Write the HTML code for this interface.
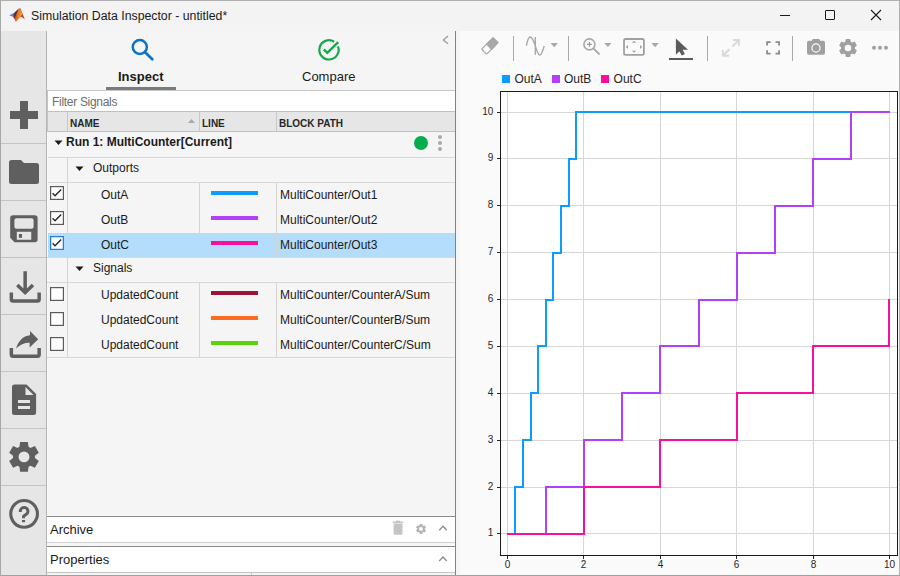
<!DOCTYPE html>
<html><head><meta charset="utf-8">
<style>
*{margin:0;padding:0;box-sizing:border-box}
html,body{width:900px;height:576px;overflow:hidden;background:#f3f3f3;font-family:"Liberation Sans",sans-serif;color:#1a1a1a}
.a{position:absolute}
.t{position:absolute;white-space:nowrap;line-height:1}
</style></head><body>
<div class="a" style="left:0;top:0;width:900px;height:576px;border:1px solid #b0b0b0;border-bottom:none"></div>
<!-- title bar -->
<svg class="a" style="left:6px;top:4px" width="24" height="22" viewBox="6 4 24 22">
  <defs><linearGradient id="lg1" x1="0" y1="0" x2="1" y2="0.3"><stop offset="0" stop-color="#8a1c16"/><stop offset="0.5" stop-color="#e0701f"/><stop offset="1" stop-color="#f3b030"/></linearGradient></defs>
  <path d="M9.2 15.3L13.5 13.2L17.8 9.6L16.5 13.5L14.2 17.2Z" fill="#3b8fd8"/>
  <path d="M13.8 14L18.8 8.2L17 14.5L14.6 18.8L13.6 17.3Z" fill="#7e1a22"/>
  <path d="M19.4 7.8L22.2 14.2L19.6 17.6L15.9 22L14.3 18.6L16.8 13Z" fill="url(#lg1)"/>
  <path d="M19.4 7.8L20.5 8.6L24.8 19.4L21.6 16.8L19.6 17.6L22.2 14.2Z" fill="#c4391d"/>
</svg>
<div class="t" style="left:31px;top:10px;font-size:12.3px;color:#1a1a1a">Simulation Data Inspector - untitled*</div>
<div class="a" style="left:780px;top:15px;width:10px;height:1px;background:#1a1a1a"></div>
<div class="a" style="left:825px;top:10px;width:10px;height:10px;border:1px solid #1a1a1a;border-radius:1px"></div>
<svg class="a" style="left:870px;top:9px" width="12" height="12" viewBox="0 0 12 12"><path d="M1 1 L11 11 M11 1 L1 11" stroke="#1a1a1a" stroke-width="1.1"/></svg>

<!-- left toolbar -->
<div class="a" style="left:1px;top:31px;width:46px;height:544px;background:#e6e6e6;border-right:1px solid #b4b4b4"></div>

<!-- left toolbar icons -->
<div class="a" style="left:1px;top:143px;width:45px;height:1px;background:#c4c4c4"></div>
<div class="a" style="left:1px;top:200px;width:45px;height:1px;background:#c4c4c4"></div>
<div class="a" style="left:1px;top:257px;width:45px;height:1px;background:#c4c4c4"></div>
<div class="a" style="left:1px;top:314px;width:45px;height:1px;background:#c4c4c4"></div>
<div class="a" style="left:1px;top:371px;width:45px;height:1px;background:#c4c4c4"></div>
<div class="a" style="left:1px;top:428px;width:45px;height:1px;background:#c4c4c4"></div>
<div class="a" style="left:1px;top:485px;width:45px;height:1px;background:#c4c4c4"></div>
<svg class="a" style="left:0;top:31px" width="46" height="544" viewBox="0 31 46 544">
 <g fill="#5f5f5f">
  <path d="M20 101h8v10h10v8h-10v10h-8v-10h-10v-8h10z"/>
  <path d="M9 162.5a2.5 2.5 0 0 1 2.5-2.5h9.5l3 3h12.5a2.5 2.5 0 0 1 2.5 2.5v16a2.5 2.5 0 0 1-2.5 2.5h-25a2.5 2.5 0 0 1-2.5-2.5z"/>
  <path fill-rule="evenodd" d="M13 215.2h21.8a2.8 2.8 0 0 1 2.8 2.8v21.5a2.8 2.8 0 0 1-2.8 2.8h-20.3l-4.3-4.6v-19.7a2.8 2.8 0 0 1 2.8-2.8zM16.4 218.3a2 2 0 0 0-2 2v6.45a2 2 0 0 0 2 2h15.2a2 2 0 0 0 2-2v-6.45a2 2 0 0 0-2-2zM16.8 231.7v8h14.45v-8z"/>
 </g>
 <rect x="18.9" y="234" width="3.1" height="3.8" fill="#5f5f5f"/>
 <g fill="none" stroke="#5f5f5f" stroke-width="3.2" stroke-linecap="round" stroke-linejoin="round">
  <path d="M25.15 271.3v21M17.3 285l7.85 7.6 7.85-7.6" stroke-linecap="butt" stroke-linejoin="miter" stroke-width="3.5"/>
  <path d="M11.35 292.4v6.9a1.8 1.8 0 0 0 1.8 1.8h24.2a1.8 1.8 0 0 0 1.8-1.8v-6.9" stroke-linecap="butt" stroke-width="3.5"/>
  <path d="M11.35 347.9v6.55a1.8 1.8 0 0 0 1.8 1.8h24.2a1.8 1.8 0 0 0 1.8-1.8v-6.55" stroke-linecap="butt" stroke-width="3.5"/>
 </g>
 <path d="M16.1 348.6C18 341.5 23 335.6 30 335.2V330.9L38.2 339.2L29.65 347.6V342.7C24.5 342.6 20 344.6 16.1 348.6z" fill="#5f5f5f"/>
 <path d="M14.5 384.5h12l9.6 9.6v18.5a2.5 2.5 0 0 1-2.5 2.5h-19.1a2.5 2.5 0 0 1-2.5-2.5v-25.6a2.5 2.5 0 0 1 2.5-2.5z" fill="#5f5f5f"/>
 <path d="M25.5 387v8h8z" fill="#e6e6e6"/>
 <rect x="18" y="400" width="12" height="3" fill="#e6e6e6"/>
 <rect x="18" y="406" width="12" height="3" fill="#e6e6e6"/>
 <path id="gear" fill="#5f5f5f" fill-rule="evenodd" d="M19.50 446.86L20.10 442.05L27.90 442.05L28.50 446.86A11.0 11.0 0 0 1 30.44 447.98L34.91 446.10L38.81 452.85L34.94 455.78A11.0 11.0 0 0 1 34.94 458.02L38.81 460.95L34.91 467.70L30.44 465.82A11.0 11.0 0 0 1 28.50 466.94L27.90 471.75L20.10 471.75L19.50 466.94A11.0 11.0 0 0 1 17.56 465.82L13.09 467.70L9.19 460.95L13.06 458.02A11.0 11.0 0 0 1 13.06 455.78L9.19 452.85L13.09 446.10L17.56 447.98A11.0 11.0 0 0 1 19.50 446.86ZM29.45 456.9A5.45 5.45 0 1 0 18.55 456.9A5.45 5.45 0 1 0 29.45 456.9Z"/>
 <circle cx="24.1" cy="513.85" r="13.35" fill="none" stroke="#5f5f5f" stroke-width="3.1"/>
 <path d="M20.3 512V511.3A3.8 3.8 0 1 1 27 513.7L23.6 516.2V518.2" fill="none" stroke="#5f5f5f" stroke-width="3"/>
 <rect x="22" y="520" width="3.1" height="2.2" fill="#5f5f5f"/>
</svg>

<!-- center panel -->
<div class="a" style="left:47px;top:31px;width:408px;height:544px;background:#f5f5f5"></div>
<div class="a" style="left:455px;top:31px;width:1px;height:544px;background:#828282"></div>
<svg class="a" style="left:128px;top:36px" width="30" height="28" viewBox="0 0 30 28">
 <circle cx="11.8" cy="11" r="7.05" fill="none" stroke="#0b72c4" stroke-width="2.5"/>
 <path d="M16.8 16L25.1 23.9" stroke="#0b72c4" stroke-width="2.7" stroke-linecap="butt"/>
</svg>
<div class="t" style="left:118px;top:69.5px;font-size:13px;font-weight:bold">Inspect</div>
<div class="a" style="left:106px;top:87px;width:70px;height:3px;background:#7a7a7a"></div>
<svg class="a" style="left:316px;top:37px" width="26" height="26" viewBox="0 0 26 26">
 <path d="M21.97 9.3A9.65 9.65 0 1 1 18.17 4.7" fill="none" stroke="#17a84a" stroke-width="2.2"/>
 <path d="M7.8 12.4L11.3 15.9L22.2 5.1" fill="none" stroke="#17a84a" stroke-width="2.4"/>
</svg>
<div class="t" style="left:302px;top:69.5px;font-size:13px">Compare</div>
<svg class="a" style="left:441px;top:34px" width="10" height="12" viewBox="0 0 10 12"><path d="M7 2L2.4 6L7 9.8" fill="none" stroke="#9a9a9a" stroke-width="1.3"/></svg>

<!-- filter + table -->
<div class="a" style="left:47px;top:90px;width:408px;height:1px;background:#c8c8c8"></div>
<div class="a" style="left:47px;top:91px;width:408px;height:20px;background:#fff"></div>
<div class="t" style="left:52px;top:96px;font-size:12px;letter-spacing:-0.3px;color:#6e6e6e">Filter Signals</div>
<div class="a" style="left:47px;top:111px;width:408px;height:21px;background:#e6e6e6;border-top:1px solid #c0c0c0;border-bottom:1px solid #c0c0c0"></div>
<div class="a" style="left:67px;top:112px;width:1px;height:19px;background:#c8c8c8"></div>
<div class="a" style="left:199px;top:112px;width:1px;height:19px;background:#c8c8c8"></div>
<div class="a" style="left:276px;top:112px;width:1px;height:19px;background:#c8c8c8"></div>
<div class="t" style="left:70px;top:118.7px;font-size:10px;font-weight:bold;color:#262626">NAME</div>
<div class="t" style="left:202px;top:118.7px;font-size:10px;font-weight:bold;color:#262626">LINE</div>
<div class="t" style="left:279px;top:118.7px;font-size:10px;font-weight:bold;color:#262626">BLOCK PATH</div>
<svg class="a" style="left:187px;top:118px" width="9" height="6"><path d="M1 5L4.5 1 8 5z" fill="#a8a8a8"/></svg>

<!-- table rows -->
<div class="a" style="left:47px;top:157px;width:408px;height:1px;background:#d8d8d8"></div>
<div class="a" style="left:47px;top:182px;width:408px;height:1px;background:#d8d8d8"></div>
<div class="a" style="left:47px;top:131px;width:1px;height:385px;background:#f9f9f9"></div>
<div class="a" style="left:47px;top:90px;width:1px;height:42px;background:#c4c4c4"></div>
<div class="a" style="left:48px;top:233px;width:407px;height:24px;background:#b3ddfb"></div>
<div class="a" style="left:47px;top:257px;width:408px;height:1px;background:#d8d8d8"></div>
<div class="a" style="left:47px;top:282px;width:408px;height:1px;background:#d8d8d8"></div>
<div class="a" style="left:47px;top:357px;width:408px;height:1px;background:#d8d8d8"></div>
<div class="a" style="left:67px;top:158px;width:1px;height:199px;background:#d4d4d4"></div>
<div class="a" style="left:199px;top:183px;width:1px;height:74px;background:#d4d4d4"></div>
<div class="a" style="left:276px;top:183px;width:1px;height:74px;background:#d4d4d4"></div>
<div class="a" style="left:199px;top:283px;width:1px;height:74px;background:#d4d4d4"></div>
<div class="a" style="left:276px;top:283px;width:1px;height:74px;background:#d4d4d4"></div>
<svg class="a" style="left:54px;top:140px" width="9" height="6"><path d="M0.5 0.5h8L4.5 5z" fill="#1a1a1a"/></svg>
<div class="t" style="left:66px;top:136px;font-size:12px;font-weight:bold">Run 1: MultiCounter[Current]</div>
<div class="a" style="left:414px;top:136px;width:14px;height:14px;border-radius:50%;background:#06ad4c"></div>
<div class="a" style="left:438px;top:135px;width:4px;height:4px;border-radius:50%;background:#a8a8a8"></div>
<div class="a" style="left:438px;top:141px;width:4px;height:4px;border-radius:50%;background:#a8a8a8"></div>
<div class="a" style="left:438px;top:147px;width:4px;height:4px;border-radius:50%;background:#a8a8a8"></div>
<svg class="a" style="left:75px;top:166px" width="9" height="6"><path d="M0.5 0.5h8L4.5 5z" fill="#1a1a1a"/></svg>
<div class="t" style="left:93px;top:162px;font-size:12px">Outports</div>
<svg class="a" style="left:75px;top:266px" width="9" height="6"><path d="M0.5 0.5h8L4.5 5z" fill="#1a1a1a"/></svg>
<div class="t" style="left:93px;top:262px;font-size:12px">Signals</div>
<svg class="a" style="left:50px;top:186px" width="14" height="14" viewBox="0 0 14 14"><rect x="0.6" y="0.6" width="12.8" height="12.8" fill="#fff" stroke="#5a5a5a" stroke-width="1.2"/><path d="M2.6 7.3L5 9.7L11.2 3.6" fill="none" stroke="#262626" stroke-width="1.4"/></svg>
<div class="t" style="left:101px;top:189px;font-size:12px">OutA</div>
<div class="a" style="left:211px;top:191px;width:47px;height:4px;background:#0e9cfc"></div>
<div class="t" style="left:280px;top:189px;font-size:12px">MultiCounter/Out1</div>
<svg class="a" style="left:50px;top:211px" width="14" height="14" viewBox="0 0 14 14"><rect x="0.6" y="0.6" width="12.8" height="12.8" fill="#fff" stroke="#5a5a5a" stroke-width="1.2"/><path d="M2.6 7.3L5 9.7L11.2 3.6" fill="none" stroke="#262626" stroke-width="1.4"/></svg>
<div class="t" style="left:101px;top:214px;font-size:12px">OutB</div>
<div class="a" style="left:211px;top:216px;width:47px;height:4px;background:#b23ffa"></div>
<div class="t" style="left:280px;top:214px;font-size:12px">MultiCounter/Out2</div>
<svg class="a" style="left:50px;top:236px" width="14" height="14" viewBox="0 0 14 14"><rect x="0.6" y="0.6" width="12.8" height="12.8" fill="#fff" stroke="#1f80e0" stroke-width="1.3"/><path d="M2.6 7.3L5 9.7L11.2 3.6" fill="none" stroke="#262626" stroke-width="1.4"/></svg>
<div class="t" style="left:101px;top:239px;font-size:12px">OutC</div>
<div class="a" style="left:211px;top:241px;width:47px;height:4px;background:#f70fa0"></div>
<div class="t" style="left:280px;top:239px;font-size:12px">MultiCounter/Out3</div>
<svg class="a" style="left:50px;top:287px" width="14" height="14" viewBox="0 0 14 14"><rect x="0.6" y="0.6" width="12.8" height="12.8" fill="#fff" stroke="#5a5a5a" stroke-width="1.2"/></svg>
<div class="t" style="left:101px;top:289px;font-size:12px">UpdatedCount</div>
<div class="a" style="left:211px;top:291px;width:47px;height:4px;background:#9d1538"></div>
<div class="t" style="left:280px;top:289px;font-size:12px">MultiCounter/CounterA/Sum</div>
<svg class="a" style="left:50px;top:312px" width="14" height="14" viewBox="0 0 14 14"><rect x="0.6" y="0.6" width="12.8" height="12.8" fill="#fff" stroke="#5a5a5a" stroke-width="1.2"/></svg>
<div class="t" style="left:101px;top:314px;font-size:12px">UpdatedCount</div>
<div class="a" style="left:211px;top:316px;width:47px;height:4px;background:#fc6b22"></div>
<div class="t" style="left:280px;top:314px;font-size:12px">MultiCounter/CounterB/Sum</div>
<svg class="a" style="left:50px;top:337px" width="14" height="14" viewBox="0 0 14 14"><rect x="0.6" y="0.6" width="12.8" height="12.8" fill="#fff" stroke="#5a5a5a" stroke-width="1.2"/></svg>
<div class="t" style="left:101px;top:339px;font-size:12px">UpdatedCount</div>
<div class="a" style="left:211px;top:341px;width:47px;height:4px;background:#5bd20e"></div>
<div class="t" style="left:280px;top:339px;font-size:12px">MultiCounter/CounterC/Sum</div>

<!-- archive / properties -->
<div class="a" style="left:47px;top:516px;width:408px;height:1px;background:#8a8a8a"></div>
<div class="a" style="left:47px;top:517px;width:408px;height:25px;background:#fff"></div>
<div class="a" style="left:47px;top:542px;width:408px;height:1px;background:#d0d0d0"></div>
<div class="a" style="left:47px;top:543px;width:408px;height:3px;background:#f7f7f7"></div>
<div class="a" style="left:47px;top:546px;width:408px;height:1px;background:#8a8a8a"></div>
<div class="a" style="left:47px;top:547px;width:408px;height:25px;background:#fff"></div>
<div class="a" style="left:47px;top:572px;width:408px;height:1px;background:#c4c4c4"></div>
<div class="a" style="left:251px;top:573px;width:1px;height:2px;background:#cccccc"></div>
<div class="t" style="left:50px;top:523px;font-size:13px">Archive</div>
<div class="t" style="left:50px;top:553px;font-size:13px">Properties</div>

<!-- plot panel -->
<div class="a" style="left:456px;top:31px;width:443px;height:544px;background:#fafafa"></div>
<div class="a" style="left:456px;top:31px;width:4px;height:544px;background:#f5f5f5"></div>
<svg class="a" style="left:0;top:0" width="900" height="576" viewBox="0 0 900 576">
 <rect x="501" y="92" width="396" height="463" fill="#fff"/>
 <rect x="507" y="92" width="1" height="463" fill="#d6d7d9"/><rect x="583" y="92" width="1" height="463" fill="#d6d7d9"/><rect x="660" y="92" width="1" height="463" fill="#d6d7d9"/><rect x="736" y="92" width="1" height="463" fill="#d6d7d9"/><rect x="813" y="92" width="1" height="463" fill="#d6d7d9"/><rect x="889" y="92" width="1" height="463" fill="#d6d7d9"/><rect x="501" y="533" width="396" height="1" fill="#d6d7d9"/><rect x="501" y="487" width="396" height="1" fill="#d6d7d9"/><rect x="501" y="440" width="396" height="1" fill="#d6d7d9"/><rect x="501" y="393" width="396" height="1" fill="#d6d7d9"/><rect x="501" y="346" width="396" height="1" fill="#d6d7d9"/><rect x="501" y="299" width="396" height="1" fill="#d6d7d9"/><rect x="501" y="252" width="396" height="1" fill="#d6d7d9"/><rect x="501" y="205" width="396" height="1" fill="#d6d7d9"/><rect x="501" y="158" width="396" height="1" fill="#d6d7d9"/><rect x="501" y="112" width="396" height="1" fill="#d6d7d9"/>
 <g fill="none" stroke-width="2" stroke-linejoin="miter" stroke-linecap="square">
  <path d="M508 534H515V487H523V440H531V393H538V346H546V300H553V253H561V206H569V159H576V112H889" stroke="#0e9cfc"/>
  <path d="M508 534H546V487H584V440H622V393H660V346H699V300H737V253H775V206H813V159H851V112H889" stroke="#b23ffa"/>
  <path d="M508 534H584V487H660V440H737V393H813V346H889V300" stroke="#f70fa0"/>
 </g>
 <rect x="500.5" y="91.5" width="397" height="464" fill="none" stroke="#1a1a1a" stroke-width="1"/>
 <rect x="497" y="533" width="3" height="1" fill="#262626"/><rect x="497" y="487" width="3" height="1" fill="#262626"/><rect x="497" y="440" width="3" height="1" fill="#262626"/><rect x="497" y="393" width="3" height="1" fill="#262626"/><rect x="497" y="346" width="3" height="1" fill="#262626"/><rect x="497" y="299" width="3" height="1" fill="#262626"/><rect x="497" y="252" width="3" height="1" fill="#262626"/><rect x="497" y="205" width="3" height="1" fill="#262626"/><rect x="497" y="158" width="3" height="1" fill="#262626"/><rect x="497" y="112" width="3" height="1" fill="#262626"/><rect x="507" y="556" width="1" height="3" fill="#262626"/><rect x="583" y="556" width="1" height="3" fill="#262626"/><rect x="660" y="556" width="1" height="3" fill="#262626"/><rect x="736" y="556" width="1" height="3" fill="#262626"/><rect x="813" y="556" width="1" height="3" fill="#262626"/><rect x="889" y="556" width="1" height="3" fill="#262626"/>
 <g font-family="Liberation Sans" font-size="10px" fill="#262626"><text x="493.3" y="536" text-anchor="end">1</text><text x="493.3" y="490" text-anchor="end">2</text><text x="493.3" y="443" text-anchor="end">3</text><text x="493.3" y="396" text-anchor="end">4</text><text x="493.3" y="349" text-anchor="end">5</text><text x="493.3" y="302" text-anchor="end">6</text><text x="493.3" y="255" text-anchor="end">7</text><text x="493.3" y="208" text-anchor="end">8</text><text x="493.3" y="161" text-anchor="end">9</text><text x="493.3" y="115" text-anchor="end">10</text><text x="507.5" y="568" text-anchor="middle">0</text><text x="583.5" y="568" text-anchor="middle">2</text><text x="660.5" y="568" text-anchor="middle">4</text><text x="736.5" y="568" text-anchor="middle">6</text><text x="813.5" y="568" text-anchor="middle">8</text><text x="889.5" y="568" text-anchor="middle">10</text></g>
 <rect x="502" y="75" width="8" height="8" fill="#0e9cfc"/>
 <rect x="552" y="75" width="8" height="8" fill="#b23ffa"/>
 <rect x="601" y="75" width="8" height="8" fill="#f70fa0"/>
 <g font-family="Liberation Sans" font-size="12px" fill="#262626">
  <text x="514.5" y="83">OutA</text><text x="564" y="83">OutB</text><text x="613.6" y="83">OutC</text>
 </g>
</svg>

<!-- plot toolbar -->
<svg class="a" style="left:456px;top:31px" width="443" height="35" viewBox="456 31 443 35">
 <g transform="rotate(-45 489.85 45.9)">
  <rect x="481.7" y="42.35" width="12" height="7.1" rx="0.8" fill="#fff" stroke="#a8a8a8" stroke-width="1.3"/>
  <rect x="488.1" y="41.7" width="10.55" height="8.4" rx="1" fill="#a8a8a8"/>
 </g>
 <rect x="513" y="36" width="1" height="25" fill="#a8a8a8"/>
 <path d="M526.4 45.6C527.5 40 528.5 37 530.2 37C532 37 534 42 535.3 46C536.6 50 538 55 539.8 55C541.5 55 543 50.5 544.2 46M535.3 37V54.7" fill="none" stroke="#a8a8a8" stroke-width="1.4"/>
 <path d="M550.5 43h7.5l-3.75 4.2z" fill="#a8a8a8"/>
 <rect x="568" y="36" width="1" height="25" fill="#a8a8a8"/>
 <circle cx="589.4" cy="44.4" r="5.5" fill="none" stroke="#a8a8a8" stroke-width="1.6"/>
 <path d="M593.6 48.6l5.4 5.3" stroke="#a8a8a8" stroke-width="2" stroke-linecap="round"/>
 <path d="M589.45 42v4.8M587 44.4h4.85" stroke="#999" stroke-width="1.1"/>
 <path d="M604.2 43h7.3l-3.65 4z" fill="#a8a8a8"/>
 <rect x="624" y="39" width="19.9" height="15.8" rx="1.6" fill="none" stroke="#a0a0a0" stroke-width="1.8"/>
 <path d="M631.9 42.8h4.2l-2.1-2zM631.9 50.8h4.2l-2.1 2zM628 44.9v4.2l-2.2-2.1zM640 44.9v4.2l2.2-2.1z" fill="#a0a0a0"/>
 <path d="M651.4 43h7.4l-3.7 4.2z" fill="#a8a8a8"/>
 <path d="M675.9 38.4V54.8L679.3 51.2L681.8 55.5L684.8 54.1L682.6 49.8H688Z" fill="#5a5a5a"/>
 <rect x="669" y="58" width="24" height="2" fill="#5a5a5a"/>
 <rect x="707" y="36" width="1" height="25" fill="#a8a8a8"/>
 <g fill="none" stroke="#d9d9d9" stroke-width="1.9" stroke-linejoin="miter">
  <path d="M732.9 39.95H738.9V46M722.85 50.1V55.75H729"/>
  <path d="M738 40.9L732.4 46.5M723.8 54.8L729.3 49.3" stroke-width="2"/>
 </g>
 <g fill="none" stroke="#8c8c8c" stroke-width="1.8" stroke-linejoin="miter">
  <path d="M767.1 45.6V42.1H770.7M775.5 42.1H779.1V45.6M779.1 50.2V53.7H775.5M770.7 53.7H767.1V50.2"/>
 </g>
 <rect x="792" y="36" width="1" height="25" fill="#a8a8a8"/>
 <path d="M808.8 40.7h3l1-1.7h6.4l1 1.7h3a1.8 1.8 0 0 1 1.8 1.8v10.4a1.8 1.8 0 0 1-1.8 1.8h-14.4a1.8 1.8 0 0 1-1.8-1.8v-10.4a1.8 1.8 0 0 1 1.8-1.8z" fill="#a0a0a0"/>
 <circle cx="816" cy="48" r="4.1" fill="none" stroke="#fafafa" stroke-width="1.2"/>
 <path fill="#a0a0a0" fill-rule="evenodd" d="M845.30 41.65L845.80 39.00L850.20 39.00L850.70 41.65A6.9 6.9 0 0 1 852.15 42.49L854.69 41.59L856.89 45.41L854.85 47.16A6.9 6.9 0 0 1 854.85 48.84L856.89 50.59L854.69 54.41L852.15 53.51A6.9 6.9 0 0 1 850.70 54.35L850.20 57.00L845.80 57.00L845.30 54.35A6.9 6.9 0 0 1 843.85 53.51L841.31 54.41L839.11 50.59L841.15 48.84A6.9 6.9 0 0 1 841.15 47.16L839.11 45.41L841.31 41.59L843.85 42.49A6.9 6.9 0 0 1 845.30 41.65ZM851.30 48A3.3 3.3 0 1 0 844.70 48A3.3 3.3 0 1 0 851.30 48Z"/>
 <circle cx="874" cy="47.8" r="2" fill="#a0a0a0"/>
 <circle cx="880" cy="47.8" r="2" fill="#a0a0a0"/>
 <circle cx="886" cy="47.8" r="2" fill="#a0a0a0"/>
</svg>

<svg class="a" style="left:385px;top:515px" width="70" height="55" viewBox="385 515 70 55">
 <rect x="396" y="520.6" width="4.3" height="1.6" fill="#c4c4c4"/>
 <rect x="392.8" y="521.6" width="10.3" height="1.7" fill="#c4c4c4"/>
 <path d="M393.6 523.8h8.9v9.9a1 1 0 0 1-1 1h-6.9a1 1 0 0 1-1-1z" fill="#c4c4c4"/>
 <path fill="#b4b4b4" fill-rule="evenodd" d="M419.40 525.45L419.65 523.90L422.35 523.90L422.60 525.45A3.8 3.8 0 0 1 423.18 525.79L424.66 525.23L426.01 527.57L424.78 528.56A3.8 3.8 0 0 1 424.78 529.24L426.01 530.23L424.66 532.57L423.18 532.01A3.8 3.8 0 0 1 422.60 532.35L422.35 533.90L419.65 533.90L419.40 532.35A3.8 3.8 0 0 1 418.82 532.01L417.34 532.57L415.99 530.23L417.22 529.24A3.8 3.8 0 0 1 417.22 528.56L415.99 527.57L417.34 525.23L418.82 525.79A3.8 3.8 0 0 1 419.40 525.45ZM422.90 528.9A1.9 1.9 0 1 0 419.10 528.9A1.9 1.9 0 1 0 422.90 528.9Z"/>
 <path d="M439.2 530.2l3.8-4 3.8 4M439.2 561l3.8-4 3.8 4" fill="none" stroke="#8c8c8c" stroke-width="1.3"/>
</svg>

<div class="a" style="left:0;top:575px;width:900px;height:1px;background:#a0a0a0"></div>
<div class="a" style="left:0;top:0;width:1px;height:576px;background:#a8a8a8"></div>
<div class="a" style="left:899px;top:0;width:1px;height:576px;background:#b0b0b0"></div>
</body></html>
